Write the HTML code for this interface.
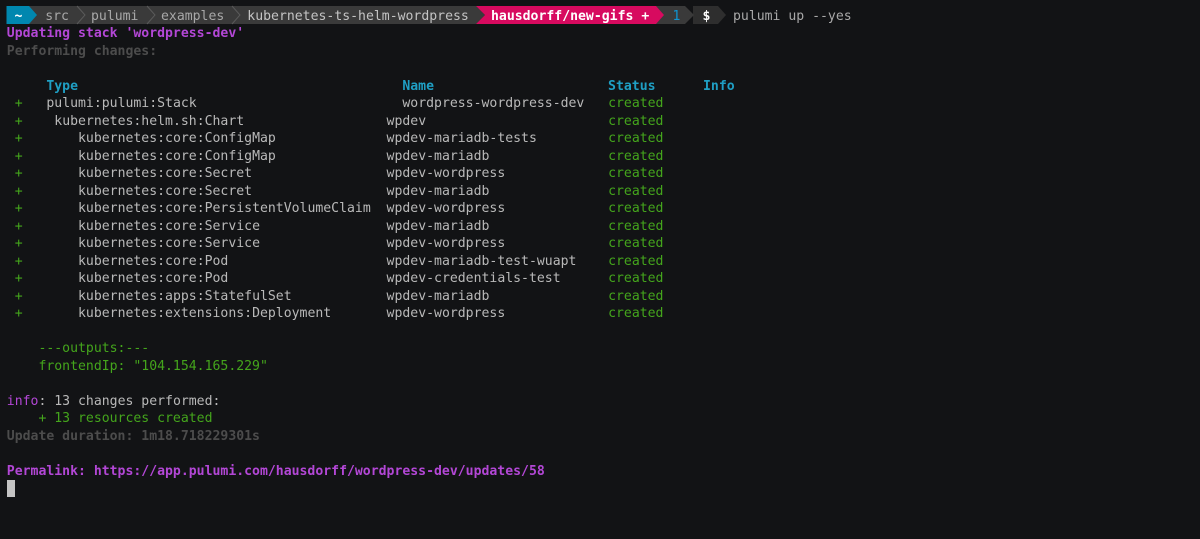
<!DOCTYPE html>
<html>
<head>
<meta charset="utf-8">
<style>
html,body{margin:0;padding:0;width:1200px;height:539px;overflow:hidden;background:#121315}
svg{position:absolute;left:0;top:0}
pre{position:absolute;margin:0;left:6.8px;top:25px;font:13.15px/17.5px "DejaVu Sans Mono",monospace;color:#b9b9b9;white-space:pre}
b{font-weight:bold}
.p{color:#b347d6}.d{color:#4c4c4c}.c{color:#1f9fc4}.g{color:#44a51c}
.t{position:absolute;top:7.5px;font:13.15px/17.5px "DejaVu Sans Mono",monospace;white-space:pre;color:#a8a8a8}
.t.k{color:#fff;font-weight:bold}.t.o{color:#0f94d2}
#cur{position:absolute;left:6.5px;top:480px;width:8px;height:17px;background:#c4c4c4}
</style>
</head>
<body>
<svg width="1200" height="30">
<polygon points="29,6 476,6 485,15 476,24 29,24" fill="#3a3a3a"/>
<polygon points="6.5,6 29,6 37,15 29,24 6.5,24" fill="#0087af"/>
<polygon points="693,6 718,6 726,15 718,24 693,24" fill="#2e2e2e"/>
<polygon points="656,6 685,6 694,15 685,24 656,24" fill="#3a3a3a"/>
<polygon points="476,6 656,6 664,15 656,24 476,24 485,15" fill="#d70a5f"/>
<g fill="none" stroke="#5a5a5a" stroke-width="1">
<polyline points="77,6 85,15 77,24"/>
<polyline points="147,6 155,15 147,24"/>
<polyline points="232,6 240,15 232,24"/>
</g>
</svg>
<b class="t k" style="left:14.5px">~</b>
<span class="t" style="left:45.2px">src</span>
<span class="t" style="left:91px">pulumi</span>
<span class="t" style="left:161px">examples</span>
<span class="t" style="left:247.3px;color:#c4c4c4">kubernetes-ts-helm-wordpress</span>
<b class="t k" style="left:491px">hausdorff/new-gifs +</b>
<span class="t o" style="left:672.5px">1</span>
<b class="t k" style="left:702.5px">$</b>
<span class="t" style="left:733px">pulumi up --yes</span>
<pre><b class="p">Updating stack 'wordpress-dev'</b>
<b class="d">Performing changes:</b>

<b class="c">     Type                                         Name                      Status      Info</b>
 <span class="g">+</span>   pulumi:pulumi:Stack                          wordpress-wordpress-dev   <span class="g">created</span>
 <span class="g">+</span>    kubernetes:helm.sh:Chart                  wpdev                       <span class="g">created</span>
 <span class="g">+</span>       kubernetes:core:ConfigMap              wpdev-mariadb-tests         <span class="g">created</span>
 <span class="g">+</span>       kubernetes:core:ConfigMap              wpdev-mariadb               <span class="g">created</span>
 <span class="g">+</span>       kubernetes:core:Secret                 wpdev-wordpress             <span class="g">created</span>
 <span class="g">+</span>       kubernetes:core:Secret                 wpdev-mariadb               <span class="g">created</span>
 <span class="g">+</span>       kubernetes:core:PersistentVolumeClaim  wpdev-wordpress             <span class="g">created</span>
 <span class="g">+</span>       kubernetes:core:Service                wpdev-mariadb               <span class="g">created</span>
 <span class="g">+</span>       kubernetes:core:Service                wpdev-wordpress             <span class="g">created</span>
 <span class="g">+</span>       kubernetes:core:Pod                    wpdev-mariadb-test-wuapt    <span class="g">created</span>
 <span class="g">+</span>       kubernetes:core:Pod                    wpdev-credentials-test      <span class="g">created</span>
 <span class="g">+</span>       kubernetes:apps:StatefulSet            wpdev-mariadb               <span class="g">created</span>
 <span class="g">+</span>       kubernetes:extensions:Deployment       wpdev-wordpress             <span class="g">created</span>

<span class="g">    ---outputs:---</span>
<span class="g">    frontendIp: "104.154.165.229"</span>

<span class="p">info</span>: 13 changes performed:
<span class="g">    + 13 resources created</span>
<b class="d">Update duration: 1m18.718229301s</b>

<b class="p">Permalink: https://app.pulumi.com/hausdorff/wordpress-dev/updates/58</b></pre>
<div id="cur"></div>
</body>
</html>
